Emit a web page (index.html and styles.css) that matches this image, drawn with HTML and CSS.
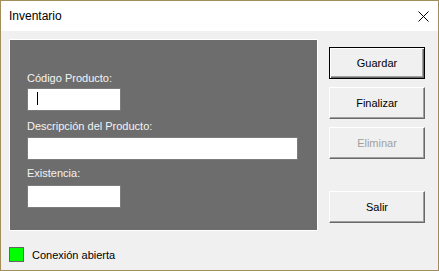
FILE: index.html
```html
<!DOCTYPE html>
<html lang="es">
<head>
    <meta charset="UTF-8">
    <title>Inventario</title>
    <link rel="stylesheet" href="styles.css">
</head>
<body>
    <div class="window">
        <div class="titlebar">
            <span class="title">Inventario</span>
            <svg class="close" width="11" height="11" viewBox="0 0 11 11">
                <path d="M0.5 0.5 L10.5 10.5 M10.5 0.5 L0.5 10.5" stroke="#000" stroke-width="1" fill="none"/>
            </svg>
        </div>

        <div class="client">
            <div class="main-row">
                <div class="panel">
                    <div class="field field-first">
                        <label class="field-label">Código Producto:</label>
                        <div class="textbox short"><span class="caret"></span></div>
                    </div>
                    <div class="field field-second">
                        <label class="field-label">Descripción del Producto:</label>
                        <div class="textbox long"></div>
                    </div>
                    <div class="field field-third">
                        <label class="field-label">Existencia:</label>
                        <div class="textbox short"></div>
                    </div>
                </div>

                <div class="actions">
                    <button class="btn default">Guardar</button>
                    <button class="btn">Finalizar</button>
                    <button class="btn" disabled>Eliminar</button>
                    <button class="btn exit">Salir</button>
                </div>
            </div>

            <div class="status">
                <span class="status-light"></span>
                <span class="status-text">Conexión abierta</span>
            </div>
        </div>
    </div>
</body>
</html>
```

FILE: styles.css
```css
* {
    margin: 0;
    padding: 0;
    box-sizing: border-box;
}

body {
    font-family: "Liberation Sans", Arial, sans-serif;
    font-size: 11px;
    background: #f0f0f0;
}

.window {
    width: 439px;
    height: 271px;
    border: 1px solid #a38e5a;
    background: #f0f0f0;
}

.titlebar {
    height: 30px;
    background: #fff;
    display: flex;
    align-items: center;
    justify-content: space-between;
    padding: 0 9px 0 8px;
}

.title {
    font-size: 12px;
    color: #000;
}

.close {
    display: block;
    margin-top: 1px;
}

.client {
    padding: 8px 0 0 8px;
}

.main-row {
    display: flex;
    align-items: flex-start;
}

.panel {
    width: 309px;
    height: 192px;
    background: #6d6d6d;
    border: 1px solid #fff;
    margin-right: 11px;
    padding: 32px 0 0 17px;
}

.field-label {
    display: block;
    color: #f4f4f4;
    line-height: 13px;
    margin-bottom: 3px;
}

.field-second {
    margin-top: 9px;
}

.field-second .field-label {
    margin-bottom: 4px;
}

.field-third {
    margin-top: 7px;
}

.field-third .field-label {
    margin-bottom: 5px;
}

.textbox {
    height: 23px;
    background: #fff;
    border: 1px solid #7c7c7c;
    position: relative;
}

.textbox.short {
    width: 94px;
}

.textbox.long {
    width: 271px;
}

.caret {
    position: absolute;
    left: 9px;
    top: 3px;
    width: 1px;
    height: 13px;
    background: #000;
}

.actions {
    display: flex;
    flex-direction: column;
    gap: 8px;
    padding-top: 8px;
}

.btn {
    width: 96px;
    height: 32px;
    font-family: "Liberation Sans", Arial, sans-serif;
    font-size: 11px;
    color: #000;
    background: #f0f0f0;
    border: 1px solid;
    border-color: #fff #696969 #696969 #fff;
    box-shadow: inset -1px -1px 0 #a0a0a0;
}

.btn.default {
    border: 1px solid #000;
    box-shadow: inset 1px 1px 0 #fff, inset -1px -1px 0 #696969, inset -2px -2px 0 #a0a0a0;
}

.btn:disabled {
    color: #a0a0a0;
}

.btn.exit {
    margin-top: 24px;
}

.status {
    display: flex;
    align-items: center;
    margin-top: 16px;
    margin-left: 0;
}

.status-light {
    width: 15px;
    height: 15px;
    background: #00ff00;
    border: 1px solid #646464;
    margin-right: 8px;
}

.status-text {
    color: #000;
    font-size: 11px;
}
```
